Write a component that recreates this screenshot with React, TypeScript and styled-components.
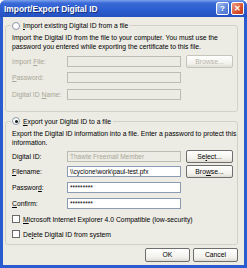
import React from 'react';
import styled, { createGlobalStyle } from 'styled-components';

const Global = createGlobalStyle`
  html, body {
    margin: 0;
    padding: 0;
    background: #fff;
  }
  body {
    font-family: "Liberation Sans", Arial, sans-serif;
    font-size: 6.8px;
    color: #000;
  }
`;

const Window = styled.div`
  width: 247px;
  height: 268px;
  box-sizing: border-box;
  display: flex;
  flex-direction: column;
  background: #2a5bcf;
  padding: 0 3px 3px 3px;
  border-radius: 6px 6px 0 0;
  overflow: hidden;
`;

const TitleBar = styled.div`
  height: 17px;
  flex: none;
  margin: 0 -3px;
  padding: 0 3px 0 4px;
  display: flex;
  align-items: center;
  background: linear-gradient(#7da2ec 0%, #3a6ad8 18%, #2b5ccf 60%, #2450bf 100%);
`;

const Title = styled.div`
  flex: 1;
  color: #fff;
  font-weight: bold;
  font-size: 8.4px;
  text-shadow: 1px 1px 0 #14307a;
`;

const CaptionButton = styled.div<{ $red?: boolean }>`
  width: 11px;
  height: 11px;
  margin-left: 2px;
  border: 1px solid #fff;
  border-radius: 2px;
  display: flex;
  align-items: center;
  justify-content: center;
  color: #fff;
  font-weight: bold;
  font-size: 8px;
  background: ${(p) =>
    p.$red
      ? 'linear-gradient(135deg, #f0a088, #d9502f 60%, #c03a1c)'
      : 'linear-gradient(135deg, #a8c0f0, #5f86dc 60%, #4a72cc)'};
`;

const Body = styled.div`
  flex: 1;
  background: #ecebe4;
  padding: 4px 3px 0 2px;
  display: flex;
  flex-direction: column;
`;

const Group = styled.fieldset<{ $bottom: number }>`
  margin: 0 3px 0 0;
  padding: 0 7px ${(p) => p.$bottom}px 6px;
  border: 1px solid #d3d1c6;
  border-radius: 3px;
  min-width: 0;
  & + & {
    margin-top: 5px;
  }
`;

const Legend = styled.legend`
  padding: 0 2px 0 1px;
  margin-left: -1px;
  display: flex;
  align-items: center;
  gap: 3px;
  height: 9px;
`;

const Radio = styled.span<{ $checked?: boolean }>`
  width: 8px;
  height: 8px;
  box-sizing: border-box;
  border-radius: 50%;
  border: 1px solid #8a96a8;
  background: #fff;
  display: flex;
  align-items: center;
  justify-content: center;
  &::after {
    content: '';
    display: ${(p) => (p.$checked ? 'block' : 'none')};
    width: 3px;
    height: 3px;
    border-radius: 50%;
    background: #1a1a1a;
  }
`;

const Desc = styled.div`
  line-height: 9px;
  white-space: nowrap;
  margin-top: 3px;
  margin-bottom: 2px;
`;

const Row = styled.div<{ $h: number }>`
  height: ${(p) => p.$h}px;
  display: flex;
  align-items: center;
  white-space: nowrap;
`;

const Label = styled.span<{ $disabled?: boolean }>`
  width: 55px;
  flex: none;
  color: ${(p) => (p.$disabled ? '#a9a797' : '#000')};
`;

const Input = styled.div<{ $disabled?: boolean }>`
  width: 114px;
  height: 11px;
  flex: none;
  box-sizing: border-box;
  border: 1px solid ${(p) => (p.$disabled ? '#bdbcb2' : '#8a9bb3')};
  background: ${(p) => (p.$disabled ? '#ecebe4' : '#fff')};
  color: ${(p) => (p.$disabled ? '#a9a797' : '#000')};
  padding: 0 2px;
  line-height: 9px;
  white-space: nowrap;
  overflow: hidden;
  font-size: 6.5px;
`;

const Button = styled.div<{ $disabled?: boolean; $w?: number }>`
  width: ${(p) => p.$w ?? 47}px;
  height: 13px;
  flex: none;
  box-sizing: border-box;
  margin-left: 5px;
  border: 1px solid ${(p) => (p.$disabled ? '#c6c5bc' : '#6e6e6e')};
  border-radius: 2px;
  background: linear-gradient(#ffffff, #f2f1ec 70%, #dedcd2);
  color: ${(p) => (p.$disabled ? '#b5b3a6' : '#000')};
  display: flex;
  align-items: center;
  justify-content: center;
`;

const Check = styled.span`
  width: 8px;
  height: 8px;
  flex: none;
  box-sizing: border-box;
  border: 1px solid #6b6b6b;
  background: #fff;
  margin-right: 3px;
`;

const Footer = styled.div`
  display: flex;
  justify-content: flex-end;
  gap: 3px;
  padding: 3px 3px 0 0;
`;

const FooterButton = styled(Button)`
  margin-left: 0;
  height: 14px;
`;

const Stars = '*********';

export default function App() {
  return (
    <>
      <Global />
      <Window>
        <TitleBar>
          <Title>Import/Export Digital ID</Title>
          <CaptionButton>?</CaptionButton>
          <CaptionButton $red>✕</CaptionButton>
        </TitleBar>
        <Body>
          <Group $bottom={8}>
            <Legend>
              <Radio />
              <span>
                <u>I</u>mport existing Digital ID from a file
              </span>
            </Legend>
            <Desc>
              Import the Digital ID from the file to your computer. You must use the
              <br />
              password you entered while exporting the certificate to this file.
            </Desc>
            <Row $h={16.5}>
              <Label $disabled>
                Import <u>F</u>ile:
              </Label>
              <Input $disabled />
              <Button $disabled>Browse...</Button>
            </Row>
            <Row $h={16.5}>
              <Label $disabled>
                <u>P</u>assword:
              </Label>
              <Input $disabled />
            </Row>
            <Row $h={16.5}>
              <Label $disabled>
                Digital ID <u>N</u>ame:
              </Label>
              <Input $disabled />
            </Row>
          </Group>
          <Group $bottom={2}>
            <Legend>
              <Radio $checked />
              <span>
                <u>E</u>xport your Digital ID to a file
              </span>
            </Legend>
            <Desc>
              Export the Digital ID information into a file. Enter a password to protect this
              <br />
              information.
            </Desc>
            <Row $h={15}>
              <Label>Digital ID:</Label>
              <Input $disabled>Thawte Freemail Member</Input>
              <Button>
                Se<u>l</u>ect...
              </Button>
            </Row>
            <Row $h={16}>
              <Label>
                <u>F</u>ilename:
              </Label>
              <Input>\\cyclone\work\paul-test.pfx</Input>
              <Button>
                Bro<u>w</u>se...
              </Button>
            </Row>
            <Row $h={16}>
              <Label>
                Passwor<u>d</u>:
              </Label>
              <Input>{Stars}</Input>
            </Row>
            <Row $h={16}>
              <Label>
                <u>C</u>onfirm:
              </Label>
              <Input>{Stars}</Input>
            </Row>
            <Row $h={15}>
              <Check />
              <span>
                <u>M</u>icrosoft Internet Explorer 4.0 Compatible (low-security)
              </span>
            </Row>
            <Row $h={15}>
              <Check />
              <span>
                De<u>l</u>ete Digital ID from system
              </span>
            </Row>
          </Group>
          <Footer>
            <FooterButton $w={45}>OK</FooterButton>
            <FooterButton $w={45}>Cancel</FooterButton>
          </Footer>
        </Body>
      </Window>
    </>
  );
}
